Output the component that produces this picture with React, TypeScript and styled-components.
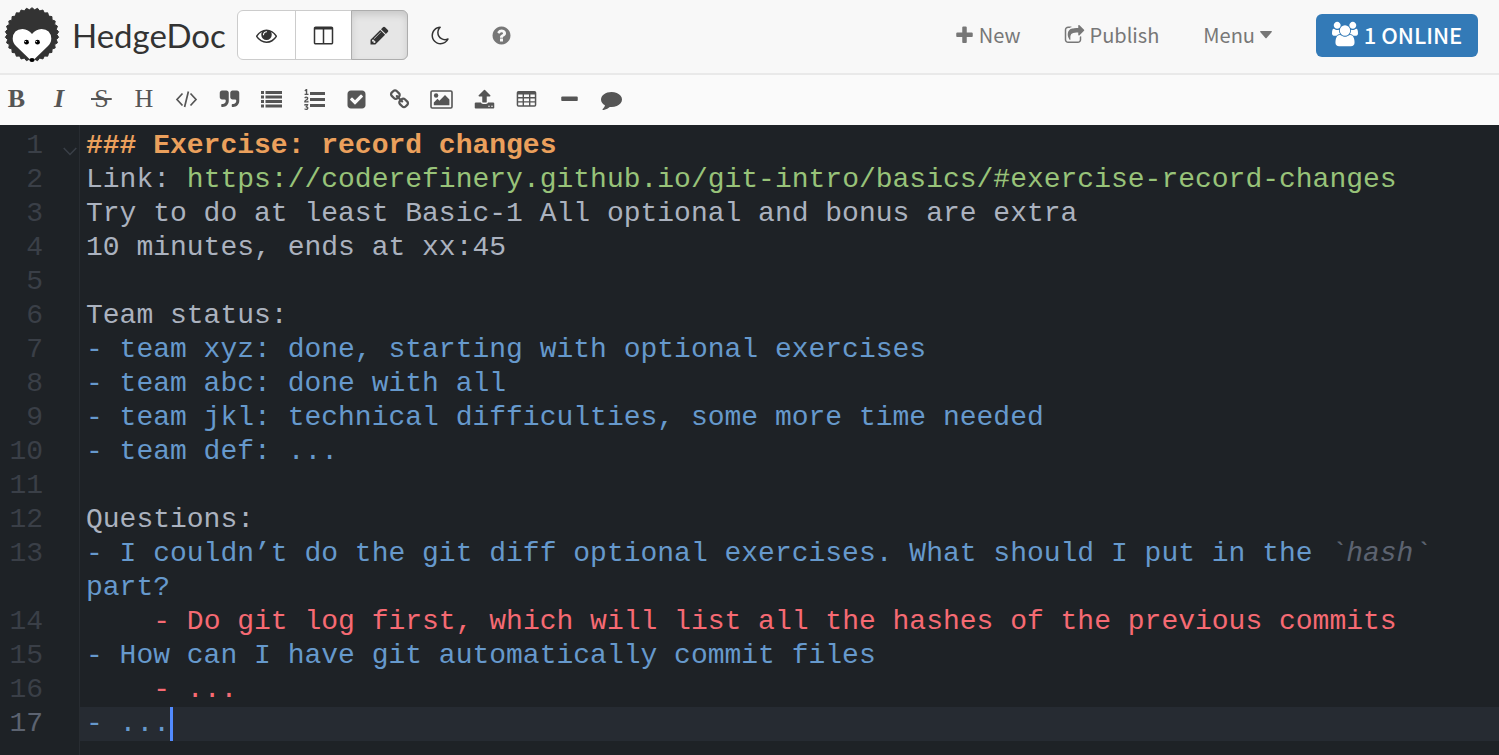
import React from "react";
import styled, { createGlobalStyle, css } from "styled-components";

const GlobalStyle = createGlobalStyle`
  * { box-sizing: border-box; }
  body {
    margin: 0;
    background: #1e2226;
    font-family: "Noto Sans CJK JP", "Open Sans", sans-serif;
  }
  button { font: inherit; color: inherit; cursor: pointer; }
`;

const Page = styled.div`
  display: flex;
  flex-direction: column;
  min-height: 100vh;
`;

const Navbar = styled.header`
  display: flex;
  align-items: center;
  height: 75px;
  padding: 0 21px 3px 4px;
  background: #f8f8f8;
  border-bottom: 2px solid #e9e9e9;
`;

const Brand = styled.a`
  display: flex;
  align-items: center;
  gap: 11px;
  width: 233px;
  color: #333;
  font-family: Lato, sans-serif;
  font-size: 33px;
  line-height: 40px;
  text-decoration: none;
  white-space: nowrap;
`;

const ModeGroup = styled.div`
  display: flex;
  height: 50px;
  border: 1px solid #ccc;
  border-radius: 6px;
  background: #fff;
`;

const ModeButton = styled.button<{ $active?: boolean }>`
  display: flex;
  align-items: center;
  justify-content: center;
  width: 56px;
  padding: 0;
  border: 0;
  border-right: 1px solid #ccc;
  background: none;
  color: #333;
  &:first-child { width: 58px; }
  ${({ $active }) =>
    $active &&
    css`
      width: 57px;
      margin: -1px;
      border: 1px solid #adadad;
      border-radius: 0 6px 6px 0;
      background: #e6e6e6;
      box-shadow: inset 0 4px 7px rgba(0, 0, 0, 0.125);
    `}
`;

const PlainButton = styled.button<{ $color: string }>`
  display: flex;
  align-items: center;
  justify-content: center;
  width: 61px;
  height: 50px;
  padding: 0;
  border: 0;
  background: none;
  color: ${({ $color }) => $color};
`;

const Tail = styled.div`
  display: flex;
  padding-left: 2px;
`;

const Actions = styled.nav`
  display: flex;
  align-items: center;
  gap: 44px;
  margin-left: auto;
  color: #777;
  font-size: 20px;
  line-height: 30px;
`;

const ActionLink = styled.a`
  display: flex;
  align-items: center;
  gap: 4px;
  color: inherit;
  text-decoration: none;
`;

const MenuButton = styled.button`
  display: flex;
  align-items: center;
  gap: 5px;
  padding: 0;
  border: 0;
  background: none;
`;

const OnlineButton = styled.button`
  display: flex;
  align-items: center;
  justify-content: center;
  gap: 6px;
  width: 162px;
  height: 43px;
  padding: 0 0 3px;
  border: 0;
  border-radius: 6px;
  background: #337ab7;
  color: #fff;
  font-size: 22px;
  font-weight: 500;
  white-space: nowrap;
`;

const Toolbar = styled.div`
  display: flex;
  align-items: center;
  height: 50px;
  padding: 0 6px 2px;
  background: #fafafa;
`;

const Tools = styled.div`
  display: flex;
  justify-content: space-between;
  width: 616px;
`;

const Tool = styled.button<{ $bold?: boolean; $italic?: boolean }>`
  display: flex;
  align-items: center;
  justify-content: center;
  width: 21px;
  height: 30px;
  padding: 0;
  border: 0;
  background: none;
  color: #555;
  font-family: "Liberation Serif", serif;
  font-size: 26px;
  font-weight: ${({ $bold }) => ($bold ? 700 : 400)};
  font-style: ${({ $italic }) => ($italic ? "italic" : "normal")};
  line-height: 30px;
`;

const Editor = styled.main`
  display: flex;
  flex: 1;
  flex-direction: column;
  background: #1e2226;
  color: #abb2bf;
  font-family: "Liberation Mono", monospace;
  font-size: 28px;
  line-height: 34px;
`;

const Row = styled.div<{ $grow?: boolean }>`
  display: grid;
  grid-template-columns: 80px 1fr;
  min-height: 4px;
  flex: ${({ $grow }) => ($grow ? "1" : "none")};
`;

const Gutter = styled.div<{ $active?: boolean }>`
  display: grid;
  grid-template-columns: 43px 1fr;
  align-items: start;
  padding-right: 2px;
  border-right: 1px solid #282c31;
  color: ${({ $active }) => ($active ? "#5c6370" : "#3a3f47")};
`;

const Num = styled.span`
  justify-self: end;
`;

const Fold = styled.button`
  display: flex;
  justify-self: end;
  padding: 18px 0 0;
  border: 0;
  background: none;
  color: #3a3f47;
`;

const Code = styled.div<{ $active?: boolean }>`
  min-height: 34px;
  padding: 0 6px;
  background: ${({ $active }) => ($active ? "#262b32" : "transparent")};
  white-space: pre-wrap;
`;

type Tone = "text" | "heading" | "link" | "list" | "nested" | "code";

const tones: Record<Tone, string> = {
  text: "#abb2bf",
  heading: "#eba05c",
  link: "#98c379",
  list: "#6699cc",
  nested: "#f66a73",
  code: "#5c6370",
};

const Token = styled.span<{ $tone: Tone }>`
  color: ${({ $tone }) => tones[$tone]};
  font-weight: ${({ $tone }) => ($tone === "heading" ? 700 : 400)};
  font-style: ${({ $tone }) => ($tone === "code" ? "italic" : "normal")};
`;

const Caret = styled.span`
  display: inline-block;
  width: 3px;
  height: 34px;
  background: #528bff;
  vertical-align: top;
`;

const glyphs = {
  eye: "M1664 960q-152-236-381-353 61 104 61 225 0 185-131.5 316.5t-316.5 131.5-316.5-131.5-131.5-316.5q0-121 61-225-229 117-381 353 133 205 333.5 326.5t434.5 121.5 434.5-121.5 333.5-326.5zm-720-384q0-20-14-34t-34-14q-125 0-214.5 89.5t-89.5 214.5q0 20 14 34t34 14 34-14 14-34q0-86 61-147t147-61q20 0 34-14t14-34zm848 384q0 34-20 69-140 230-376.5 368.5t-499.5 138.5-499.5-139-376.5-368q-20-35-20-69t20-69q140-229 376.5-368t499.5-139 499.5 139 376.5 368q20 35 20 69z",
  columns: "M224 1536h608v-1152h-640v1120q0 13 9.5 22.5t22.5 9.5zm1376-32v-1120h-640v1152h608q13 0 22.5-9.5t9.5-22.5zm128-1216v1216q0 66-47 113t-113 47h-1344q-66 0-113-47t-47-113v-1216q0-66 47-113t113-47h1344q66 0 113 47t47 113z",
  pencil: "M491 1536l91-91-235-235-91 91v107h128v128h107zm523-928q0-22-22-22-10 0-17 7l-542 542q-7 7-7 17 0 22 22 22 10 0 17-7l542-542q7-7 7-17zm-54-192l416 416-832 832h-416v-416zm683 96q0 53-37 90l-166 166-416-416 166-165q36-38 90-38 53 0 91 38l235 234q37 39 37 91z",
  moon: "M1390 1303q-54 9-110 9-182 0-337-90t-245-245-90-337q0-192 104-357-201 60-328.5 229t-127.5 384q0 130 51 248.5t136.5 204 204 136.5 248.5 51q144 0 273.5-61.5t220.5-171.5zm203-85q-94 203-283.5 324.5t-413.5 121.5q-156 0-298-61t-245-164-164-245-61-298q0-153 57.5-292.5t156-241.5 235.5-164.5 290-68.5q44-2 61 39 18 41-15 72-86 78-131.5 181.5t-45.5 218.5q0 148 73 273t198 198 273 73q118 0 228-51 41-18 72 13 14 14 17.5 34t-4.5 38z",
  help: "M1024 1376v-192q0-14-9-23t-23-9h-192q-14 0-23 9t-9 23v192q0 14 9 23t23 9h192q14 0 23-9t9-23zm256-672q0-88-55.5-163t-138.5-116-170-41q-243 0-371 213-15 24 8 42l132 100q7 6 19 6 16 0 25-12 53-68 86-92 34-24 86-24 48 0 85.5 26t37.5 59q0 38-20 61t-68 45q-63 28-115.5 86.5t-52.5 125.5v36q0 14 9 23t23 9h192q14 0 23-9t9-23q0-19 21.5-49.5t54.5-49.5q32-18 49-28.5t46-35 44.5-48 28-60.5 12.5-81zm384 192q0 209-103 385.5t-279.5 279.5-385.5 103-385.5-103-279.5-279.5-103-385.5 103-385.5 279.5-279.5 385.5-103 385.5 103 279.5 279.5 103 385.5z",
  plus: "M1600 736v192q0 40-28 68t-68 28h-416v416q0 40-28 68t-68 28h-192q-40 0-68-28t-28-68v-416h-416q-40 0-68-28t-28-68v-192q0-40 28-68t68-28h416v-416q0-40 28-68t68-28h192q40 0 68 28t28 68v416h416q40 0 68 28t28 68z",
  share: "M1472 989v259q0 119-84.5 203.5t-203.5 84.5h-832q-119 0-203.5-84.5t-84.5-203.5v-832q0-119 84.5-203.5t203.5-84.5h255q13 0 22.5 9.5t9.5 22.5q0 27-26 32-77 26-133 60-10 4-16 4h-112q-66 0-113 47t-47 113v832q0 66 47 113t113 47h832q66 0 113-47t47-113v-214q0-19 18-29 28-13 54-37 16-16 35-8 21 9 21 29zm237-496l-384 384q-18 19-45 19-12 0-25-5-39-17-39-59v-192h-160q-323 0-438 131-119 137-74 473 3 23-20 34-8 2-12 2-16 0-26-13-10-14-21-31t-39.5-68.5-49.5-99.5-38.5-114-17.5-122q0-49 3.5-91t14-90 28-88 47-81.5 68.5-74 94.5-61.5 124.5-48.5 159.5-30.5 196.5-11h160v-192q0-42 39-59 13-5 25-5 26 0 45 19l384 384q19 19 19 45t-19 45z",
  users: "M529 896q-162 5-265 128h-134q-82 0-138-40.5t-56-118.5q0-353 124-353 6 0 43.5 21t97.5 42.5 119 21.5q67 0 133-23-5 37-5 66 0 139 81 256zm1071 637q0 120-73 189.5t-194 69.5h-874q-121 0-194-69.5t-73-189.5q0-53 3.5-103.5t14-109 26.5-108.5 43-97.5 62-81 85.5-53.5 111.5-20q10 0 43 21.5t73 48 107 48 135 21.5 135-21.5 107-48 73-48 43-21.5q61 0 111.5 20t85.5 53.5 62 81 43 97.5 26.5 108.5 14 109 3.5 103.5zm-1024-1277q0 106-75 181t-181 75-181-75-75-181 75-181 181-75 181 75 75 181zm704 384q0 159-112.5 271.5t-271.5 112.5-271.5-112.5-112.5-271.5 112.5-271.5 271.5-112.5 271.5 112.5 112.5 271.5zm576 225q0 78-56 118.5t-138 40.5h-134q-103-123-265-128 81-117 81-256 0-29-5-66 66 23 133 23 59 0 119-21.5t97.5-42.5 43.5-21q124 0 124 353zm-128-609q0 106-75 181t-181 75-181-75-75-181 75-181 181-75 181 75 75 181z",
  quote: "M832 320v704q0 104-40.5 198.5t-109.5 163.5-163.5 109.5-198.5 40.5h-64q-26 0-45-19t-19-45v-128q0-26 19-45t45-19h64q106 0 181-75t75-181v-32q0-40-28-68t-68-28h-224q-80 0-136-56t-56-136v-384q0-80 56-136t136-56h384q80 0 136 56t56 136zm896 0v704q0 104-40.5 198.5t-109.5 163.5-163.5 109.5-198.5 40.5h-64q-26 0-45-19t-19-45v-128q0-26 19-45t45-19h64q106 0 181-75t75-181v-32q0-40-28-68t-68-28h-224q-80 0-136-56t-56-136v-384q0-80 56-136t136-56h384q80 0 136 56t56 136z",
  list: "M0 160h256v256h-256zM384 160h1408v256h-1408zM0 544h256v256h-256zM384 544h1408v256h-1408zM0 928h256v256h-256zM384 928h1408v256h-1408zM0 1312h256v256h-256zM384 1312h1408v256h-1408z",
  ordered: "M381 1620q0 80-54.5 126t-135.5 46q-106 0-172-66l57-88q49 45 106 45 29 0 50.5-14.5t21.5-42.5q0-64-105-56l-26-56q8-10 32.5-43.5t42.5-54 37-38.5v-1q-16 0-48.5 1t-48.5 1v53h-106v-152h333v88l-95 115q51 12 81 49t30 88zm2-627v159h-362q-6-36-6-54 0-51 23.5-93t56.5-68 66-47.5 56.5-43.5 23.5-45q0-25-14.5-38.5t-39.5-13.5q-46 0-81 58l-85-59q24-51 71.5-79.5t105.5-28.5q73 0 123 41.5t50 112.5q0 50-34 91.5t-75 64.5-75.5 50.5-35.5 52.5h127v-60h105zm1409 319v192q0 13-9.5 22.5t-22.5 9.5h-1216q-13 0-22.5-9.5t-9.5-22.5v-192q0-14 9-23t23-9h1216q13 0 22.5 9.5t9.5 22.5zm-1408-899v99h-335v-99h107q0-41 .5-122t.5-121v-12h-2q-8 17-50 54l-71-76 136-127h106v404h108zm1408 387v192q0 13-9.5 22.5t-22.5 9.5h-1216q-13 0-22.5-9.5t-9.5-22.5v-192q0-14 9-23t23-9h1216q13 0 22.5 9.5t9.5 22.5zm0-512v192q0 13-9.5 22.5t-22.5 9.5h-1216q-13 0-22.5-9.5t-9.5-22.5v-192q0-13 9.5-22.5t22.5-9.5h1216q13 0 22.5 9.5t9.5 22.5z",
  check: "M813 1299l614-614q19-19 19-45t-19-45l-102-102q-19-19-45-19t-45 19l-467 467-211-211q-19-19-45-19t-45 19l-102 102q-19 19-19 45t19 45l358 358q19 19 45 19t45-19zm851-883v960q0 119-84.5 203.5t-203.5 84.5h-960q-119 0-203.5-84.5t-84.5-203.5v-960q0-119 84.5-203.5t203.5-84.5h960q119 0 203.5 84.5t84.5 203.5z",
  link: "M1520 1216q0-40-28-68l-208-208q-28-28-68-28-42 0-72 32 3 3 19 18.5t21.5 21.5 15 19 13 25.5 3.5 27.5q0 40-28 68t-68 28q-15 0-27.5-3.5t-25.5-13-19-15-21.5-21.5-18.5-19q-33 31-33 73 0 40 28 68l206 207q27 27 68 27 40 0 68-26l147-146q28-28 28-67zm-703-705q0-40-28-68l-206-207q-28-28-68-28-39 0-68 27l-147 146q-28 28-28 67 0 40 28 68l208 208q27 27 68 27 42 0 72-31-3-3-19-18.5t-21.5-21.5-15-19-13-25.5-3.5-27.5q0-40 28-68t68-28q15 0 27.5 3.5t25.5 13 19 15 21.5 21.5 18.5 19q33-31 33-73zm895 705q0 120-85 203l-147 146q-83 83-203 83-121 0-204-85l-206-207q-83-83-83-203 0-123 88-209l-88-88q-86 88-208 88-120 0-204-84l-208-208q-84-84-84-204t85-203l147-146q83-83 203-83 121 0 204 85l206 207q83 83 83 203 0 123-88 209l88 88q86-88 208-88 120 0 204 84l208 208q84 84 84 204z",
  upload: "M1344 1472q0-26-19-45t-45-19-45 19-19 45 19 45 45 19 45-19 19-45zm256 0q0-26-19-45t-45-19-45 19-19 45 19 45 45 19 45-19 19-45zm128-224v320q0 40-28 68t-68 28h-1472q-40 0-68-28t-28-68v-320q0-40 28-68t68-28h427q21 56 70.5 92t110.5 36h256q61 0 110.5-36t70.5-92h427q40 0 68 28t28 68zm-325-648q-17 40-59 40h-256v448q0 26-19 45t-45 19h-256q-26 0-45-19t-19-45v-448h-256q-42 0-59-40-17-39 14-69l448-448q18-19 45-19t45 19l448 448q31 30 14 69z",
  minus: "M1600 736v192q0 40-28 68t-68 28h-1216q-40 0-68-28t-28-68v-192q0-40 28-68t68-28h1216q40 0 68 28t28 68z",
  comment: "M1792 896q0 174-120 321.5t-326 233-450 85.5q-70 0-145-8-198 175-460 242-49 14-114 22-17 2-30.5-9t-17.5-29v-1q-3-4-.5-12t2-10 4.5-9.5l6-9 7-8.5 8-9q7-8 31-34.5t34.5-38 31-39.5 32.5-51 27-59 26-76q-157-89-247.5-220t-90.5-281q0-130 71-248.5t191-204.5 286-136.5 348-50.5q244 0 450 85.5t326 233 120 321.5z",
};

const Svg = styled.svg`
  display: block;
  flex: none;
  fill: currentColor;
`;

function Icon({ name, size = 21 }: { name: keyof typeof glyphs; size?: number }) {
  return (
    <Svg width={size} height={size} viewBox={name === "users" ? "-64 0 1920 1792" : "0 0 1792 1792"} aria-hidden="true">
      <path d={glyphs[name]} />
    </Svg>
  );
}

const CodeIcon = () => (
  <Svg width="23" height="21" viewBox="0 0 23 21" aria-hidden="true">
    <path d="M7.5 4.5L2 10.5L7.5 16.5M15.5 4.5L21 10.5L15.5 16.5M13.4 2.5L9.6 18" fill="none" stroke="currentColor" strokeWidth="1.7" />
  </Svg>
);

const ImageIcon = () => (
  <Svg width="23" height="21" viewBox="0 0 23 21" aria-hidden="true">
    <rect x="1" y="2" width="21" height="17" rx="1.2" fill="none" stroke="currentColor" strokeWidth="1.6" />
    <circle cx="6.1" cy="6.5" r="2.2" />
    <path d="M3.8 16.2V13.4L7.5 9.8L9.4 11.7L15 6.1L19.4 10.5V16.2Z" />
  </Svg>
);

const TableIcon = () => (
  <Svg width="21" height="21" viewBox="0 0 21 21" aria-hidden="true">
    <path
      fillRule="evenodd"
      d="M2.5 2H18.5Q20.3 2 20.3 3.8V16Q20.3 17.8 18.5 17.8H2.5Q.7 17.8 .7 16V3.8Q.7 2 2.5 2ZM2.2 5.4V8H6.6V5.4ZM8 5.4V8H13V5.4ZM14.4 5.4V8H18.8V5.4ZM2.2 9.4V12.2H6.6V9.4ZM8 9.4V12.2H13V9.4ZM14.4 9.4V12.2H18.8V9.4ZM2.2 13.6V16.3H6.6V13.6ZM8 13.6V16.3H13V13.6ZM14.4 13.6V16.3H18.8V13.6Z"
    />
  </Svg>
);

const CaretDown = () => (
  <Svg width="12" height="8" viewBox="0 0 12 8" aria-hidden="true">
    <path d="M.8 0H11.2Q12.4 .4 11.6 1.3L6.6 6.9Q6 7.5 5.4 6.9L.4 1.3Q-.4 .4 .8 0Z" />
  </Svg>
);

const spikes = Array.from({ length: 60 }, (_, i) => {
  const angle = (i * Math.PI) / 30;
  const r = i % 2 ? 24.8 : 26.8;
  return `${(28 + r * Math.sin(angle)).toFixed(2)},${(27.5 - r * Math.cos(angle)).toFixed(2)}`;
}).join(" ");

const Hedgehog = () => (
  <Svg width="57" height="56" viewBox="0 0 57 56" aria-hidden="true">
    <polygon points={spikes} fill="#333" stroke="#333" strokeLinejoin="round" />
    <path d="M28 54.5L12.5 39.5Q8.7 36 8.7 31.5Q9.2 22.2 18.5 21.9Q24.5 22.2 28 27Q31.5 22.2 37.5 21.9Q46.8 22.2 47.3 31.5Q47.3 36 43.5 39.5Z" fill="#fff" />
    <circle cx="22.5" cy="35.2" r="2.4" fill="#000" />
    <circle cx="33.5" cy="35.2" r="2.4" fill="#000" />
    <circle cx="21.5" cy="34.6" r=".7" fill="#fff" />
    <circle cx="32.5" cy="34.6" r=".7" fill="#fff" />
    <ellipse cx="28" cy="53" rx="2.6" ry="1.9" fill="#000" />
  </Svg>
);

const FoldIcon = () => (
  <Svg width="14" height="9" viewBox="0 0 14 9" aria-hidden="true">
    <path d="M.7 1L7 7.5L13.3 1" fill="none" stroke="currentColor" strokeWidth="1.5" />
  </Svg>
);

const Struck = styled.s`
  padding: 0 3px;
  background: linear-gradient(currentColor, currentColor) center / 100% 2px no-repeat;
  text-decoration: none;
`;

const lines: [Tone, string][][] = [
  [["heading", "### Exercise: record changes"]],
  [["text", "Link: "], ["link", "https://coderefinery.github.io/git-intro/basics/#exercise-record-changes"]],
  [["text", "Try to do at least Basic-1 All optional and bonus are extra"]],
  [["text", "10 minutes, ends at xx:45"]],
  [],
  [["text", "Team status:"]],
  [["list", "- team xyz: done, starting with optional exercises"]],
  [["list", "- team abc: done with all"]],
  [["list", "- team jkl: technical difficulties, some more time needed"]],
  [["list", "- team def: ..."]],
  [],
  [["text", "Questions:"]],
  [["list", "- I couldn’t do the git diff optional exercises. What should I put in the "], ["code", "`hash`"], ["list", " part?"]],
  [["nested", "    - Do git log first, which will list all the hashes of the previous commits"]],
  [["list", "- How can I have git automatically commit files"]],
  [["nested", "    - ..."]],
  [["list", "- ..."]],
];

export default function App() {
  const current = lines.length - 1;
  return (
    <Page>
      <GlobalStyle />
      <Navbar>
        <Brand href="#">
          <Hedgehog />
          HedgeDoc
        </Brand>
        <ModeGroup role="group" aria-label="View mode">
          <ModeButton aria-label="View"><Icon name="eye" /></ModeButton>
          <ModeButton aria-label="Both"><Icon name="columns" /></ModeButton>
          <ModeButton $active aria-label="Edit" aria-pressed="true"><Icon name="pencil" /></ModeButton>
        </ModeGroup>
        <Tail>
          <PlainButton $color="#333" aria-label="Night mode"><Icon name="moon" /></PlainButton>
          <PlainButton $color="#777" aria-label="Help"><Icon name="help" /></PlainButton>
        </Tail>
        <Actions>
          <ActionLink href="#new"><Icon name="plus" />New</ActionLink>
          <ActionLink href="#publish"><Icon name="share" />Publish</ActionLink>
          <MenuButton>Menu<CaretDown /></MenuButton>
          <OnlineButton><Icon name="users" size={26} />1 ONLINE</OnlineButton>
        </Actions>
      </Navbar>
      <Toolbar role="toolbar" aria-label="Formatting">
        <Tools>
          <Tool $bold aria-label="Bold">B</Tool>
          <Tool $bold $italic aria-label="Italic">I</Tool>
          <Tool aria-label="Strikethrough"><Struck>S</Struck></Tool>
          <Tool aria-label="Heading">H</Tool>
          <Tool aria-label="Code"><CodeIcon /></Tool>
          <Tool aria-label="Quote"><Icon name="quote" /></Tool>
          <Tool aria-label="List"><Icon name="list" /></Tool>
          <Tool aria-label="Numbered list"><Icon name="ordered" /></Tool>
          <Tool aria-label="Check list"><Icon name="check" /></Tool>
          <Tool aria-label="Link"><Icon name="link" /></Tool>
          <Tool aria-label="Image"><ImageIcon /></Tool>
          <Tool aria-label="Upload"><Icon name="upload" /></Tool>
          <Tool aria-label="Table"><TableIcon /></Tool>
          <Tool aria-label="Line"><Icon name="minus" /></Tool>
          <Tool aria-label="Comment"><Icon name="comment" /></Tool>
        </Tools>
      </Toolbar>
      <Editor>
        <Row><Gutter /></Row>
        {lines.map((tokens, i) => (
          <Row key={i}>
            <Gutter $active={i === current}>
              <Num>{i + 1}</Num>
              {i === 0 && <Fold aria-label="Fold section"><FoldIcon /></Fold>}
            </Gutter>
            <Code $active={i === current}>
              {tokens.map(([tone, text], j) => (
                <Token key={j} $tone={tone}>{text}</Token>
              ))}
              {i === current && <Caret />}
            </Code>
          </Row>
        ))}
        <Row $grow><Gutter /></Row>
      </Editor>
    </Page>
  );
}
